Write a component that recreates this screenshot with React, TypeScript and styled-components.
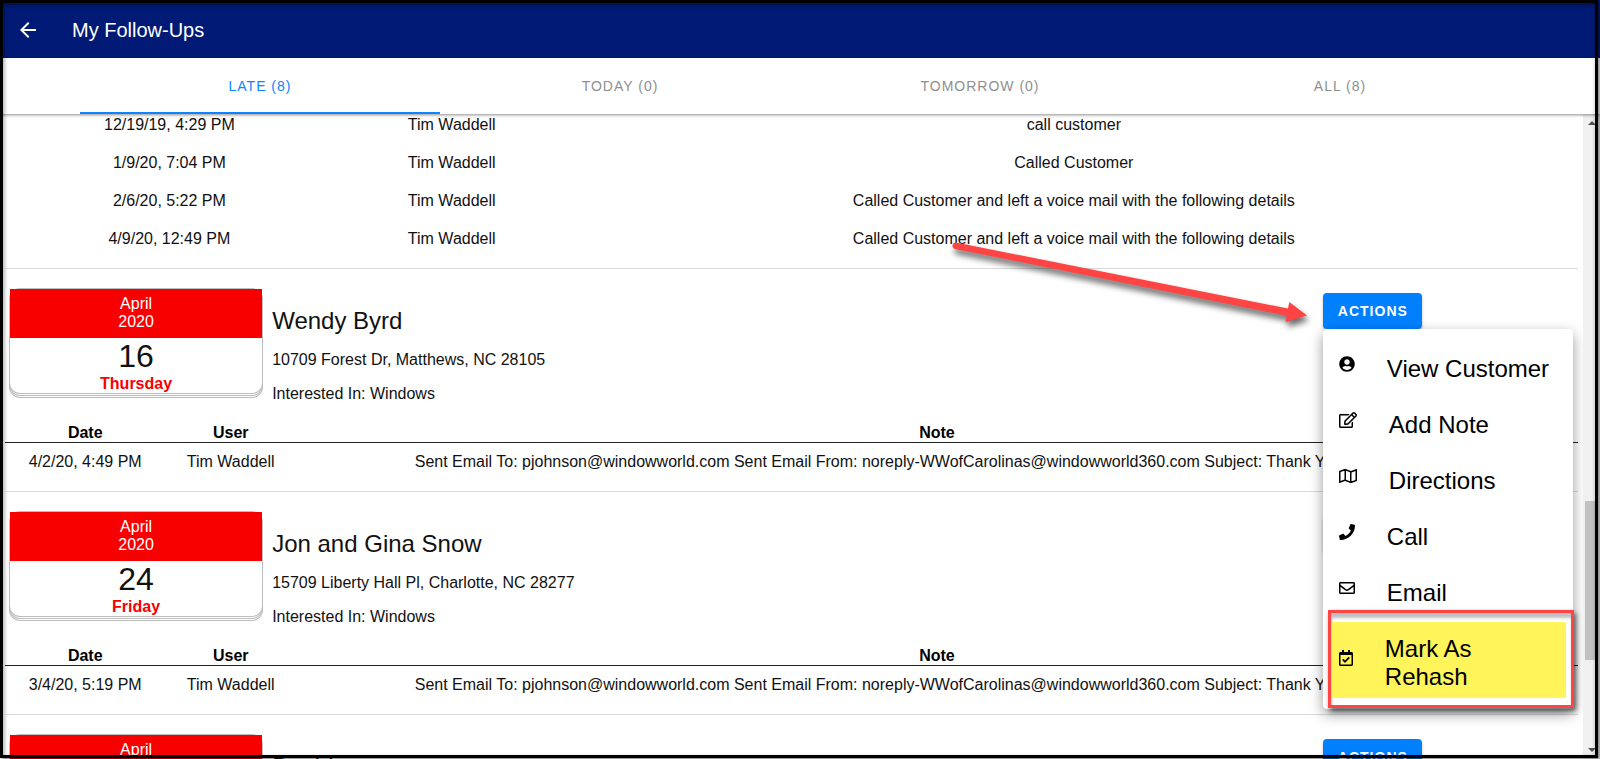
import React from "react";
import styled, { createGlobalStyle } from "styled-components";
import {
  FaUserCircle,
  FaRegEdit,
  FaRegMap,
  FaPhone,
  FaRegEnvelope,
  FaRegCalendarCheck,
} from "react-icons/fa";

const GlobalStyle = createGlobalStyle`
  * { box-sizing: border-box; }
  body {
    margin: 0;
    background: #fff;
    color: #111;
    font: 16px/18px "Liberation Sans", Arial, sans-serif;
  }
  button { font-family: inherit; cursor: pointer; }
`;

const Page = styled.div`
  position: relative;
  display: flex;
  flex-direction: column;
  height: 100vh;
  overflow: hidden;
`;

const Toolbar = styled.header`
  display: flex;
  flex: none;
  align-items: center;
  gap: 32px;
  height: 58px;
  padding: 2px 16px 0;
  background: #001a75;
  color: #fff;
`;

const BackButton = styled.button`
  display: flex;
  padding: 0;
  border: 0;
  background: none;
  color: inherit;
`;

const Title = styled.h1`
  margin: 0;
  font-size: 20px;
  line-height: 24px;
  font-weight: 500;
`;

const Tabs = styled.nav`
  position: relative;
  z-index: 2;
  display: flex;
  flex: none;
  justify-content: center;
  height: 56px;
  background: #fff;
  box-shadow: 0 1px 3px rgba(0, 0, 0, 0.45);
`;

const Tab = styled.button<{ $active?: boolean }>`
  flex: 1;
  max-width: 360px;
  padding: 2px 0 0;
  border: 0;
  border-bottom: 2px solid ${(p) => (p.$active ? "#0a84ff" : "transparent")};
  background: none;
  color: ${(p) => (p.$active ? "#0a84ff" : "#8f8f8f")};
  font-size: 14px;
  letter-spacing: 1px;
`;

const Body = styled.div`
  display: flex;
  flex: 1;
  min-height: 0;
`;

const Content = styled.main`
  flex: 1;
  min-width: 0;
  overflow: hidden;
  padding: 0 5px;
`;

/* The list rests slightly scrolled, its first row tucked under the tabs. */
const List = styled.div`
  margin-top: -8px;
`;

const Card = styled.section`
  padding-bottom: 10px;
  border-bottom: 1px solid #dcdcdc;
`;

const CardHead = styled.div`
  display: grid;
  grid-template-columns: 2fr 8fr 2fr;
  padding: 20px 0;
`;

const DateCell = styled.div`
  padding: 0 5px;
`;

const Calendar = styled.div`
  height: 104px;
  border-radius: 10px;
  background: #fff;
  text-align: center;
  box-shadow: 0 0 0 1px #bdbdbd, 0 2px 0 0 #fff, 0 2px 0 1px #bdbdbd,
    0 4px 0 0 #fff, 0 4px 0 1px #bdbdbd;
`;

const Month = styled.div`
  padding: 6px 0 7px;
  background: #f80000;
  color: #fff;
`;

const Day = styled.div`
  font-size: 32px;
  line-height: 37px;
`;

const Weekday = styled.div`
  color: #f80000;
  font-weight: 700;
`;

const Info = styled.div`
  display: flex;
  flex-direction: column;
  gap: 16px;
  padding: 18px 5px 0;
`;

const Name = styled.h2`
  margin: 0;
  font-size: 24px;
  line-height: 28px;
  font-weight: 400;
`;

const Line = styled.p`
  margin: 0;
`;

const ActionCell = styled.div`
  position: relative;
  padding: 4px 7px 0;
`;

const ActionButton = styled.button`
  display: block;
  height: 36px;
  padding: 0 14px 0 15px;
  border: 0;
  border-radius: 4px;
  background: #0080ff;
  color: #fff;
  font-size: 14px;
  font-weight: 700;
  letter-spacing: 1px;
  box-shadow: 0 2px 3px rgba(0, 0, 0, 0.25);
`;

const Menu = styled.div`
  position: absolute;
  top: 40px;
  left: 7px;
  z-index: 3;
  width: 250px;
  padding: 8px 0;
  border-radius: 4px;
  background: #fff;
  box-shadow: 0 5px 14px rgba(0, 0, 0, 0.4);
`;

const MenuItem = styled.button<{ $icon: number; $tall?: boolean }>`
  position: relative;
  display: flex;
  align-items: center;
  gap: 32px;
  width: 100%;
  height: ${(p) => (p.$tall ? 84 : 56)}px;
  padding: 0 16px;
  border: 0;
  background: none;
  color: #000;
  font-size: 24px;
  line-height: 28px;
  text-align: left;

  svg {
    position: relative;
    flex: none;
    width: ${(p) => p.$icon}px;
    height: 16px;
    margin-bottom: 2px;
  }
`;

const MenuLabel = styled.span<{ $narrow?: boolean }>`
  position: relative;
  padding-top: 8px;
  max-width: ${(p) => (p.$narrow ? "120px" : "none")};
`;

const Marker = styled.span`
  position: absolute;
  inset: 5px 7px 3px 9px;
  background: #fff45a;
`;

const CalloutBox = styled.span`
  position: absolute;
  inset: -7px -1px -7px 5px;
  border: 3px solid #ff4444;
  box-shadow: 2px 3px 5px rgba(0, 0, 0, 0.6),
    inset 1px 5px 3px rgba(0, 0, 0, 0.25);
`;

const Arrow = styled.svg`
  position: absolute;
  right: 100%;
  top: -53px;
  z-index: 4;
  overflow: visible;
  filter: drop-shadow(2px 5px 3px rgba(0, 0, 0, 0.6));
  pointer-events: none;
`;

const Notes = styled.table<{ $first: string; $second: string }>`
  width: 100%;
  border-collapse: separate;
  border-spacing: 0;
  table-layout: fixed;
  text-align: center;

  col:nth-child(1) { width: ${(p) => p.$first}; }
  col:nth-child(2) { width: ${(p) => p.$second}; }
  th {
    height: 20px;
    padding: 1px 0 0;
    border-bottom: 1px solid #222;
    color: #000;
  }
  td {
    height: 38px;
    padding: 10px 0;
    white-space: nowrap;
  }
`;

const Scrollbar = styled.div`
  display: flex;
  flex: none;
  flex-direction: column;
  align-items: center;
  justify-content: space-between;
  width: 17px;
  padding: 7px 0;
  background: #f0f0f0;
`;

const ScrollArrow = styled.i<{ $down?: boolean }>`
  border: 4px solid transparent;
  ${(p) =>
    p.$down
      ? "border-top-color: #505050; border-bottom: 0;"
      : "border-bottom-color: #505050; border-top: 0;"}
`;

const ScrollTrack = styled.div`
  display: flex;
  flex: 1;
  flex-direction: column;
  width: 13px;
`;

const Space = styled.div<{ $grow: number }>`
  flex: ${(p) => p.$grow};
`;

const Thumb = styled.div`
  flex: 159;
  background: #c1c1c1;
`;

const Frame = styled.div`
  position: absolute;
  inset: 0 2px 1px 0;
  z-index: 10;
  border: 3px solid #000;
  box-shadow: inset 1px 2px 4px rgba(0, 0, 0, 0.4),
    2px 2px 4px rgba(0, 0, 0, 0.5);
  pointer-events: none;
`;

type Note = { date: string; user: string; note: string };

type FollowUp = {
  day: string;
  weekday: string;
  name: string;
  address: string;
  notes: Note[];
  open?: boolean;
};

const email =
  "Sent Email To: pjohnson@windowworld.com Sent Email From: noreply-WWofCarolinas@windowworld360.com Subject: Thank You For Your Inquiry";

const earlier: Note[] = [
  { date: "12/19/19, 4:29 PM", user: "Tim Waddell", note: "call customer" },
  { date: "1/9/20, 7:04 PM", user: "Tim Waddell", note: "Called Customer" },
  {
    date: "2/6/20, 5:22 PM",
    user: "Tim Waddell",
    note: "Called Customer and left a voice mail with the following details",
  },
  {
    date: "4/9/20, 12:49 PM",
    user: "Tim Waddell",
    note: "Called Customer and left a voice mail with the following details",
  },
];

const followUps: FollowUp[] = [
  {
    day: "16",
    weekday: "Thursday",
    name: "Wendy Byrd",
    address: "10709 Forest Dr, Matthews, NC 28105",
    notes: [{ date: "4/2/20, 4:49 PM", user: "Tim Waddell", note: email }],
    open: true,
  },
  {
    day: "24",
    weekday: "Friday",
    name: "Jon and Gina Snow",
    address: "15709 Liberty Hall Pl, Charlotte, NC 28277",
    notes: [{ date: "3/4/20, 5:19 PM", user: "Tim Waddell", note: email }],
  },
  { day: "", weekday: "", name: "David", address: "", notes: [] },
];

const NoteRows = ({ notes }: { notes: Note[] }) => (
  <tbody>
    {notes.map((n) => (
      <tr key={n.date}>
        <td>{n.date}</td>
        <td>{n.user}</td>
        <td>{n.note}</td>
      </tr>
    ))}
  </tbody>
);

const Columns = () => (
  <colgroup>
    <col />
    <col />
    <col />
  </colgroup>
);

const ActionMenu = () => (
  <Menu role="menu">
    <MenuItem role="menuitem" $icon={16}>
      <FaUserCircle />
      <MenuLabel>View Customer</MenuLabel>
    </MenuItem>
    <MenuItem role="menuitem" $icon={18}>
      <FaRegEdit />
      <MenuLabel>Add Note</MenuLabel>
    </MenuItem>
    <MenuItem role="menuitem" $icon={18}>
      <FaRegMap />
      <MenuLabel>Directions</MenuLabel>
    </MenuItem>
    <MenuItem role="menuitem" $icon={16}>
      <FaPhone />
      <MenuLabel>Call</MenuLabel>
    </MenuItem>
    <MenuItem role="menuitem" $icon={16}>
      <FaRegEnvelope />
      <MenuLabel>Email</MenuLabel>
    </MenuItem>
    <MenuItem role="menuitem" $icon={14} $tall>
      <CalloutBox />
      <Marker />
      <FaRegCalendarCheck />
      <MenuLabel $narrow>Mark As Rehash</MenuLabel>
    </MenuItem>
  </Menu>
);

const FollowUpCard = ({ item }: { item: FollowUp }) => (
  <Card>
    <CardHead>
      <DateCell>
        <Calendar>
          <Month>
            April
            <br />
            2020
          </Month>
          <Day>{item.day}</Day>
          <Weekday>{item.weekday}</Weekday>
        </Calendar>
      </DateCell>
      <Info>
        <Name>{item.name}</Name>
        {item.address && <Line>{item.address}</Line>}
        {item.address && <Line>Interested In: Windows</Line>}
      </Info>
      <ActionCell>
        {item.open && (
          <Arrow width="366" height="100" viewBox="950 236 366 100" aria-hidden="true">
            <path
              d="M956 242.500 L1288 308.500 L1289.300 302 L1307 315.500 L1285.700 322 L1286.700 315.800 L955 249 A3.300 3.300 0 0 1 956 242.500 Z"
              fill="#ff4444"
            />
          </Arrow>
        )}
        <ActionButton>ACTIONS</ActionButton>
        {item.open && <ActionMenu />}
      </ActionCell>
    </CardHead>
    {item.notes.length > 0 && (
      <Notes $first="10.2%" $second="8.3%">
        <Columns />
        <thead>
          <tr>
            <th>Date</th>
            <th>User</th>
            <th>Note</th>
          </tr>
        </thead>
        <NoteRows notes={item.notes} />
      </Notes>
    )}
  </Card>
);

export default function App() {
  return (
    <Page>
      <GlobalStyle />
      <Toolbar>
        <BackButton aria-label="Back">
          <svg width="24" height="24" viewBox="0 0 24 24" fill="#fff">
            <path d="M20 11H7.830l5.590-5.590L12 4l-8 8 8 8 1.410-1.410L7.830 13H20v-2z" />
          </svg>
        </BackButton>
        <Title>My Follow-Ups</Title>
      </Toolbar>
      <Tabs>
        <Tab $active>LATE (8)</Tab>
        <Tab>TODAY (0)</Tab>
        <Tab>TOMORROW (0)</Tab>
        <Tab>ALL (8)</Tab>
      </Tabs>
      <Body>
        <Content>
          <List>
            <Card>
              <Notes $first="20.9%" $second="15%">
                <Columns />
                <NoteRows notes={earlier} />
              </Notes>
            </Card>
            {followUps.map((item) => (
              <FollowUpCard key={item.name} item={item} />
            ))}
          </List>
        </Content>
        <Scrollbar aria-hidden="true">
          <ScrollArrow />
          <ScrollTrack>
            <Space $grow={376} />
            <Thumb />
            <Space $grow={88} />
          </ScrollTrack>
          <ScrollArrow $down />
        </Scrollbar>
      </Body>
      <Frame />
    </Page>
  );
}
